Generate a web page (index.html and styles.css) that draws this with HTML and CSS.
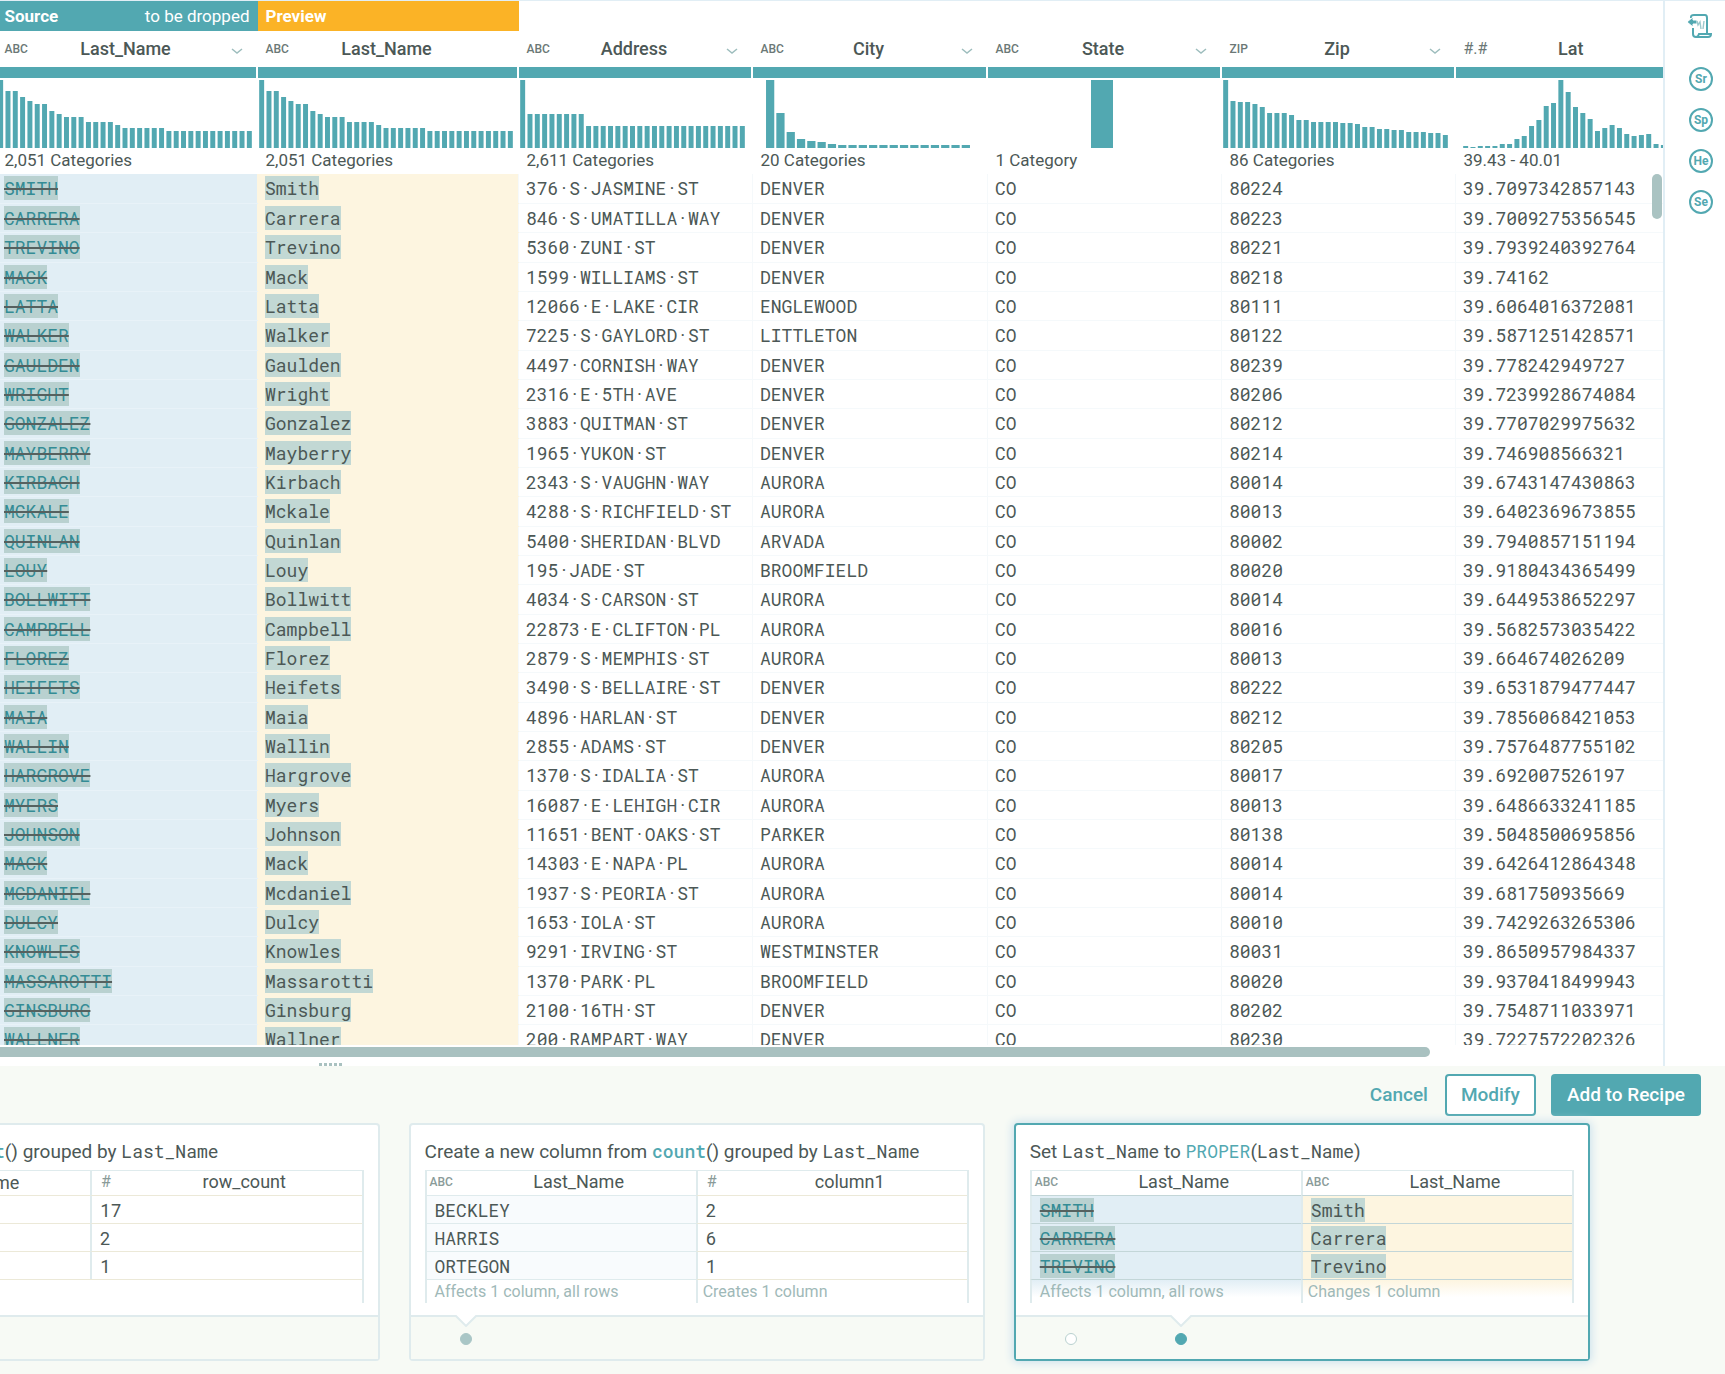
FILE: index.html
```html
<!DOCTYPE html>
<html lang="en">
<head>
<meta charset="utf-8">
<title>Transformer grid</title>
<link rel="stylesheet" href="styles.css">
</head>
<body>
<div class="workspace">
  <main class="grid-pane">
    <div class="viewport">
      <table class="grid">
        <colgroup><col class="c-wide"><col class="c-wide"><col class="c-even"><col class="c-odd"><col class="c-even"><col class="c-even"><col></colgroup>
        <thead>
          <tr class="banners">
            <th class="source"><div class="split"><b>Source</b><span>to be dropped</span></div></th>
            <th class="preview"><b>Preview</b></th>
            <td colspan="5"></td>
          </tr>
          <tr class="heads">
            <th>
              <div class="name"><span class="type">ABC</span><span class="label">Last_Name</span><button class="menu" aria-label="Last_Name menu"><svg viewBox="0 0 12 8"><path d="M1 2l5 4 5-4"/></svg></button></div>
              <div class="quality"></div>
              <svg class="hist h35" viewBox="0 0 35 68" preserveAspectRatio="none"><path d="M0 68V0h1v11h2v6h1v4h1v3h2v7h1v3h1v3h3v5h4v3h1v3h6v3h12v17z"/><path class="gaps" d="M-.16 34H36"/></svg>
              <div class="count">2,051 Categories</div>
            </th>
            <th>
              <div class="name"><span class="type">ABC</span><span class="label">Last_Name</span><span class="menu"></span></div>
              <div class="quality"></div>
              <svg class="hist h35" viewBox="0 0 35 68" preserveAspectRatio="none"><path d="M0 68V0h1v11h2v6h1v4h1v3h2v7h1v3h1v3h3v5h4v3h1v3h6v3h12v17z"/><path class="gaps" d="M-.16 34H36"/></svg>
              <div class="count">2,051 Categories</div>
            </th>
            <th>
              <div class="name"><span class="type">ABC</span><span class="label">Address</span><button class="menu" aria-label="Address menu"><svg viewBox="0 0 12 8"><path d="M1 2l5 4 5-4"/></svg></button></div>
              <div class="quality"></div>
              <svg class="hist h31" viewBox="0 0 31 68" preserveAspectRatio="none"><path d="M0 68V0h1v34h8v12h22v22z"/><path class="gaps" d="M-.16 34H36"/></svg>
              <div class="count">2,611 Categories</div>
            </th>
            <th>
              <div class="name"><span class="type">ABC</span><span class="label">City</span><button class="menu" aria-label="City menu"><svg viewBox="0 0 12 8"><path d="M1 2l5 4 5-4"/></svg></button></div>
              <div class="quality"></div>
              <svg class="hist h20" viewBox="0 0 20 68" preserveAspectRatio="none"><path d="M0 68V0h1v33h1v19h1v7h1v2h1v1h1v2h1v1h13v3z"/><path class="gaps" d="M-.1 34H36"/></svg>
              <div class="count">20 Categories</div>
            </th>
            <th>
              <div class="name"><span class="type">ABC</span><span class="label">State</span><button class="menu" aria-label="State menu"><svg viewBox="0 0 12 8"><path d="M1 2l5 4 5-4"/></svg></button></div>
              <div class="quality"></div>
              <svg class="hist h31" viewBox="0 0 227 68" preserveAspectRatio="none"><path d="M103 0h22v68h-22z"/></svg>
              <div class="count">1 Category</div>
            </th>
            <th>
              <div class="name"><span class="type">ZIP</span><span class="label">Zip</span><button class="menu" aria-label="Zip menu"><svg viewBox="0 0 12 8"><path d="M1 2l5 4 5-4"/></svg></button></div>
              <div class="quality"></div>
              <svg class="hist h31" viewBox="0 0 31 68" preserveAspectRatio="none"><path d="M0 68V0h1v21h1v1h2v2h1v3h1v6h3v2h1v5h2v2h4v1h2v1h1v3h2v2h2v1h2v2h3v1h2v2h1v13z"/><path class="gaps" d="M-.16 34H36"/></svg>
              <div class="count">86 Categories</div>
            </th>
            <th>
              <div class="name"><span class="type num">#.#</span><span class="label">Lat</span><span class="menu"></span></div>
              <div class="quality"></div>
              <svg class="hist h31 shifted" viewBox="0 0 31 68" preserveAspectRatio="none"><path d="M0 68V66h1v1h1v-1h3v-2h2v-5h1v-3h1v-10h1v-6h1v-14h1v-3h1V0h1v12h1v15h1v6h1v6h1v12h1v-3h1v-3h1v3h1v6h1v2h1v-1h1v-1h1v10h1v1h2v3z"/><path class="gaps" d="M-.16 34H36"/></svg>
              <div class="count">39.43 - 40.01</div>
            </th>
          </tr>
        </thead>
        <tbody>
          <tr><td><s>SMITH</s></td><td><mark>Smith</mark></td><td>376·S·JASMINE·ST</td><td>DENVER</td><td>CO</td><td>80224</td><td>39.7097342857143</td></tr>
          <tr><td><s>CARRERA</s></td><td><mark>Carrera</mark></td><td>846·S·UMATILLA·WAY</td><td>DENVER</td><td>CO</td><td>80223</td><td>39.7009275356545</td></tr>
          <tr><td><s>TREVINO</s></td><td><mark>Trevino</mark></td><td>5360·ZUNI·ST</td><td>DENVER</td><td>CO</td><td>80221</td><td>39.7939240392764</td></tr>
          <tr><td><s>MACK</s></td><td><mark>Mack</mark></td><td>1599·WILLIAMS·ST</td><td>DENVER</td><td>CO</td><td>80218</td><td>39.74162</td></tr>
          <tr><td><s>LATTA</s></td><td><mark>Latta</mark></td><td>12066·E·LAKE·CIR</td><td>ENGLEWOOD</td><td>CO</td><td>80111</td><td>39.6064016372081</td></tr>
          <tr><td><s>WALKER</s></td><td><mark>Walker</mark></td><td>7225·S·GAYLORD·ST</td><td>LITTLETON</td><td>CO</td><td>80122</td><td>39.5871251428571</td></tr>
          <tr><td><s>GAULDEN</s></td><td><mark>Gaulden</mark></td><td>4497·CORNISH·WAY</td><td>DENVER</td><td>CO</td><td>80239</td><td>39.778242949727</td></tr>
          <tr><td><s>WRIGHT</s></td><td><mark>Wright</mark></td><td>2316·E·5TH·AVE</td><td>DENVER</td><td>CO</td><td>80206</td><td>39.7239928674084</td></tr>
          <tr><td><s>GONZALEZ</s></td><td><mark>Gonzalez</mark></td><td>3883·QUITMAN·ST</td><td>DENVER</td><td>CO</td><td>80212</td><td>39.7707029975632</td></tr>
          <tr><td><s>MAYBERRY</s></td><td><mark>Mayberry</mark></td><td>1965·YUKON·ST</td><td>DENVER</td><td>CO</td><td>80214</td><td>39.746908566321</td></tr>
          <tr><td><s>KIRBACH</s></td><td><mark>Kirbach</mark></td><td>2343·S·VAUGHN·WAY</td><td>AURORA</td><td>CO</td><td>80014</td><td>39.6743147430863</td></tr>
          <tr><td><s>MCKALE</s></td><td><mark>Mckale</mark></td><td>4288·S·RICHFIELD·ST</td><td>AURORA</td><td>CO</td><td>80013</td><td>39.6402369673855</td></tr>
          <tr><td><s>QUINLAN</s></td><td><mark>Quinlan</mark></td><td>5400·SHERIDAN·BLVD</td><td>ARVADA</td><td>CO</td><td>80002</td><td>39.7940857151194</td></tr>
          <tr><td><s>LOUY</s></td><td><mark>Louy</mark></td><td>195·JADE·ST</td><td>BROOMFIELD</td><td>CO</td><td>80020</td><td>39.9180434365499</td></tr>
          <tr><td><s>BOLLWITT</s></td><td><mark>Bollwitt</mark></td><td>4034·S·CARSON·ST</td><td>AURORA</td><td>CO</td><td>80014</td><td>39.6449538652297</td></tr>
          <tr><td><s>CAMPBELL</s></td><td><mark>Campbell</mark></td><td>22873·E·CLIFTON·PL</td><td>AURORA</td><td>CO</td><td>80016</td><td>39.5682573035422</td></tr>
          <tr><td><s>FLOREZ</s></td><td><mark>Florez</mark></td><td>2879·S·MEMPHIS·ST</td><td>AURORA</td><td>CO</td><td>80013</td><td>39.664674026209</td></tr>
          <tr><td><s>HEIFETS</s></td><td><mark>Heifets</mark></td><td>3490·S·BELLAIRE·ST</td><td>DENVER</td><td>CO</td><td>80222</td><td>39.6531879477447</td></tr>
          <tr><td><s>MAIA</s></td><td><mark>Maia</mark></td><td>4896·HARLAN·ST</td><td>DENVER</td><td>CO</td><td>80212</td><td>39.7856068421053</td></tr>
          <tr><td><s>WALLIN</s></td><td><mark>Wallin</mark></td><td>2855·ADAMS·ST</td><td>DENVER</td><td>CO</td><td>80205</td><td>39.7576487755102</td></tr>
          <tr><td><s>HARGROVE</s></td><td><mark>Hargrove</mark></td><td>1370·S·IDALIA·ST</td><td>AURORA</td><td>CO</td><td>80017</td><td>39.692007526197</td></tr>
          <tr><td><s>MYERS</s></td><td><mark>Myers</mark></td><td>16087·E·LEHIGH·CIR</td><td>AURORA</td><td>CO</td><td>80013</td><td>39.6486633241185</td></tr>
          <tr><td><s>JOHNSON</s></td><td><mark>Johnson</mark></td><td>11651·BENT·OAKS·ST</td><td>PARKER</td><td>CO</td><td>80138</td><td>39.5048500695856</td></tr>
          <tr><td><s>MACK</s></td><td><mark>Mack</mark></td><td>14303·E·NAPA·PL</td><td>AURORA</td><td>CO</td><td>80014</td><td>39.6426412864348</td></tr>
          <tr><td><s>MCDANIEL</s></td><td><mark>Mcdaniel</mark></td><td>1937·S·PEORIA·ST</td><td>AURORA</td><td>CO</td><td>80014</td><td>39.681750935669</td></tr>
          <tr><td><s>DULCY</s></td><td><mark>Dulcy</mark></td><td>1653·IOLA·ST</td><td>AURORA</td><td>CO</td><td>80010</td><td>39.7429263265306</td></tr>
          <tr><td><s>KNOWLES</s></td><td><mark>Knowles</mark></td><td>9291·IRVING·ST</td><td>WESTMINSTER</td><td>CO</td><td>80031</td><td>39.8650957984337</td></tr>
          <tr><td><s>MASSAROTTI</s></td><td><mark>Massarotti</mark></td><td>1370·PARK·PL</td><td>BROOMFIELD</td><td>CO</td><td>80020</td><td>39.9370418499943</td></tr>
          <tr><td><s>GINSBURG</s></td><td><mark>Ginsburg</mark></td><td>2100·16TH·ST</td><td>DENVER</td><td>CO</td><td>80202</td><td>39.7548711033971</td></tr>
          <tr><td><s>WALLNER</s></td><td><mark>Wallner</mark></td><td>200·RAMPART·WAY</td><td>DENVER</td><td>CO</td><td>80230</td><td>39.7227572202326</td></tr>
        </tbody>
      </table>
      <div class="vthumb"></div>
    </div>
    <div class="hthumb"></div>
    <div class="resizer"><i></i><i></i><i></i><i></i><i></i></div>
  </main>
  <nav class="rail">
    <button class="recipe" aria-label="Recipe"><svg viewBox="0 0 26 28"><path d="M4 6V5q0-2 3-2h11q2 0 2 3v16M6 16v6q0 3 3 3h12q3 0 3-3H12q-1 3-3 3"/><path class="solid" d="M0 10l6-5v3h4v4H6v3z"/><path class="faint" d="M10 9l1 4 2-3 1 7m3-8l-1 8"/></svg></button>
    <button class="token">Sr</button>
    <button class="token">Sp</button>
    <button class="token">He</button>
    <button class="token">Se</button>
  </nav>
</div>
<section class="suggestions">
  <div class="actions">
    <button class="cancel">Cancel</button>
    <button class="modify">Modify</button>
    <button class="add">Add to Recipe</button>
  </div>
  <div class="cards">
    <article class="card cut">
      <h3><code class="fn">t</code>() grouped by <code>Last_Name</code></h3>
      <table class="mini">
        <colgroup><col class="c-cut"><col></colgroup>
        <tr><th><span class="label">me</span></th><th><div class="name"><span class="type num">#</span><span class="label">row_count</span></div></th></tr>
        <tr><td></td><td>17</td></tr>
        <tr><td></td><td>2</td></tr>
        <tr><td></td><td>1</td></tr>
        <tr class="notes"><td></td><td></td></tr>
      </table>
      <div class="foot"></div>
    </article>
    <article class="card">
      <h3>Create a new column from <code class="fn">count</code>() grouped by <code>Last_Name</code></h3>
      <table class="mini affects">
        <tr><th><div class="name"><span class="type">ABC</span><span class="label">Last_Name</span></div></th><th><div class="name"><span class="type num">#</span><span class="label">column1</span></div></th></tr>
        <tr><td>BECKLEY</td><td>2</td></tr>
        <tr><td>HARRIS</td><td>6</td></tr>
        <tr><td>ORTEGON</td><td>1</td></tr>
        <tr class="notes"><td>Affects 1 column, all rows</td><td>Creates 1 column</td></tr>
      </table>
      <div class="foot">
        <label class="choice on"><input type="radio" name="count" checked aria-label="Variant 1"><svg class="notch" viewBox="0 0 22 12"><path d="M0 0l11 11L22 0"/></svg></label>
      </div>
    </article>
    <article class="card active">
      <h3>Set <code>Last_Name</code> to <code class="fn plain">PROPER</code>(<code>Last_Name</code>)</h3>
      <table class="mini changes">
        <tr><th><div class="name"><span class="type">ABC</span><span class="label">Last_Name</span></div></th><th><div class="name"><span class="type">ABC</span><span class="label">Last_Name</span></div></th></tr>
        <tr><td><s>SMITH</s></td><td><mark>Smith</mark></td></tr>
        <tr><td><s>CARRERA</s></td><td><mark>Carrera</mark></td></tr>
        <tr><td><s>TREVINO</s></td><td><mark>Trevino</mark></td></tr>
        <tr class="notes"><td>Affects 1 column, all rows</td><td>Changes 1 column</td></tr>
      </table>
      <div class="foot">
        <label class="choice"><input type="radio" name="proper" aria-label="Variant 1"></label>
        <label class="choice on"><input type="radio" name="proper" checked aria-label="Variant 2"><svg class="notch" viewBox="0 0 22 12"><path d="M0 0l11 11L22 0"/></svg></label>
      </div>
    </article>
  </div>
</section>
</body>
</html>
```
FILE: styles.css
```css
:root {
  --teal: #52a8b1;
  --ink: #4c5856;
  --mist: #b9d1d0;
  --sky: #e1eef5;
  --cream: #fdf5e0;
  --panel: #f7faf5;
  --line: #dfebed;
  --mono: "Roboto Mono", "DejaVu Sans Mono", monospace;
}

* { box-sizing: border-box; }

html { height: 100%; }

body {
  display: flex;
  flex-direction: column;
  height: 100%;
  margin: 0;
  overflow: hidden;
  background: #fff;
  color: var(--ink);
  font: 17px/24px Roboto, "Open Sans", sans-serif;
}

button {
  padding: 0;
  border: 0;
  background: none;
  color: inherit;
  font: inherit;
}

.workspace {
  display: flex;
  flex: 1;
  min-height: 0;
  border-top: 1px solid var(--sky);
}

.grid-pane {
  display: flex;
  flex: 1;
  flex-direction: column;
  min-width: 0;
  border-right: 2px solid var(--sky);
}

.viewport {
  position: relative;
  flex: 1;
  min-height: 0;
  overflow: hidden;
}

/* The grid is scrolled so both edge columns run under the pane's sides. */
.grid {
  width: calc(100% + 30px);
  margin-left: -4px;
  border-collapse: collapse;
  table-layout: fixed;
}

.c-wide { width: 261px; }
.c-even { width: 234px; }
.c-odd { width: 235px; }

.grid th, .grid td { padding: 0; }

.banners { height: 30px; }
.banners th {
  padding: 0 8px;
  color: #fff;
  font-weight: 400;
  text-align: left;
}
.banners b { font-weight: 700; }
.source { background: var(--teal); }
.preview { background: #fbb326; }
.split { display: flex; justify-content: space-between; }

.heads th {
  padding: 0;
  font-weight: 400;
  text-align: left;
  vertical-align: top;
}

.name {
  display: flex;
  align-items: center;
  height: 36px;
  padding: 0 9px 0 8px;
}
.type {
  width: 32px;
  color: #6b7876;
  font-size: 12px;
  font-weight: 500;
  text-align: left;
}
.type.num { font-size: 16px; font-weight: 400; }
.label { flex: 1; font-size: 18px; text-align: center; }
.grid .label { font-weight: 500; }
.menu { width: 34px; text-align: right; }
.menu svg { display: inline-block; width: 12px; height: 8px; margin-right: 6px; fill: none; stroke: #9dbdbd; stroke-width: 1.5; }

.quality {
  height: 11px;
  margin-right: 2px;
  background: var(--teal);
}

.hist {
  display: block;
  height: 68px;
  margin: 2px 0 0;
  fill: var(--teal);
}
.h35 { width: 256px; }
.h31 { width: 227px; }
.h20 { width: 206px; margin-left: 12px; }
.shifted { margin-left: 6px; }
.gaps { stroke: #fff; stroke-width: 68; stroke-dasharray: .32 .68; }
.h20 .gaps { stroke-dasharray: .2 .8; }

.count { height: 26px; padding-left: 8px; }

.grid tbody { font: 18px/24px var(--mono); }
.grid tbody tr { height: 29px; }
.grid tbody tr:nth-child(3n) { height: 30px; }
.grid tbody td {
  padding: 0 0 0 7px;
  border-bottom: 1px solid #f5f9fb;
  border-left: 1px solid #f5f9fb;
  white-space: nowrap;
}
.grid tbody td:nth-child(1) { border-color: #e8f2f8; background: var(--sky); }
.grid tbody td:nth-child(2) { border-color: #fdf5e0; background: var(--cream); }

s, mark { display: inline-block; height: 24px; }
s {
  background: var(--mist);
  color: #348c95;
  text-decoration: line-through 2px #56615f;
}
mark { background: #c2d8d4; color: inherit; }

.vthumb {
  position: absolute;
  top: 173px;
  right: 1px;
  width: 10px;
  height: 45px;
  border-radius: 5px;
  background: #aac3c2;
}

.hthumb {
  width: 86%;
  height: 10px;
  margin: 2px 0 0;
  border-radius: 0 5px 5px 0;
  background: #a9c1c0;
}

.resizer { display: flex; gap: 2px; height: 9px; padding: 6px 0 0 319px; }
.resizer i { width: 3px; height: 3px; background: #a9c1c0; }

.rail {
  display: flex;
  flex-direction: column;
  align-items: center;
  gap: 17px;
  width: 60px;
  padding: 11px 0 0 12px;
}
.recipe { width: 26px; height: 28px; margin: 0 2px 10px 0; }
.recipe svg { display: block; fill: none; stroke: var(--teal); stroke-width: 2; }
.recipe .solid { fill: var(--teal); stroke: #fff; stroke-width: 1; }
.recipe .faint { stroke: #9dc9cd; stroke-width: 1.4; }
.token {
  width: 24px;
  height: 24px;
  border: 2px solid var(--teal);
  border-radius: 50%;
  color: var(--teal);
  font-size: 12px;
  font-weight: 700;
  line-height: 20px;
}

.suggestions {
  padding: 8px 0 13px;
  background: var(--panel);
}

.actions {
  display: flex;
  align-items: center;
  justify-content: flex-end;
  padding-right: 24px;
  color: var(--teal);
  font-size: 19px;
  font-weight: 500;
}
.actions button { height: 42px; }
.cancel { margin-right: 17px; }
.modify {
  margin-right: 15px;
  padding: 0 14px;
  border: 2px solid var(--teal);
  border-radius: 4px;
  background: #fff;
}
.add {
  padding: 0 16px;
  border-radius: 4px;
  background: var(--teal);
  color: #fff;
}

.cards {
  display: flex;
  gap: 29px;
  margin-top: 7px;
  padding-right: 135px;
}
.card {
  flex: 576 1 0;
  min-width: 0;
  border: 2px solid var(--line);
  border-radius: 4px;
  background: #fff;
}
.card.cut {
  flex-grow: 380;
  border-left: 0;
  border-radius: 0 4px 4px 0;
}
.card.active { border-color: var(--teal); box-shadow: 0 0 8px 2px #cfe3ee; }

.card h3 {
  margin: 0;
  padding: 14px 14px 6px;
  overflow: hidden;
  font-size: 19px;
  font-weight: 400;
  line-height: 24px;
  white-space: nowrap;
}
.card.cut h3 { padding-left: 0; text-indent: -6px; }
code { font: 18px/24px var(--mono); }
.fn { color: var(--teal); font-weight: 500; }
.fn.plain { font-weight: 400; }

.mini {
  width: calc(100% - 28px);
  margin: 0 14px;
  border-top: 1px solid var(--line);
  border-right: 2px solid var(--line);
  border-spacing: 0;
  table-layout: fixed;
}
.mini th, .mini td { padding: 0; border-left: 2px solid var(--line); }
.mini th { height: 24px; font-weight: 400; }
.mini .name { height: 22px; padding: 0 0 2px 3px; }
.mini .type { color: #8a9b99; }
.mini .type.num { padding-left: 6px; }
.mini td {
  height: 28px;
  padding-left: 8px;
  border-top: 1px solid var(--line);
  font: 18px/24px var(--mono);
  text-align: left;
}
.mini .notes td {
  height: 24px;
  padding-left: 5px;
  color: #9fb9b8;
  font: 16px/22px Roboto, "Open Sans", sans-serif;
}
.mini .notes td:first-child { padding-left: 8px; }

.card.cut .mini { width: calc(100% - 14px); margin-left: 0; }
.c-cut { width: 90px; }
.cut .mini th:first-child, .cut .mini td:first-child { border-left: 0; }
.cut .mini th:first-child { overflow: hidden; text-align: left; text-indent: -6px; }
.cut .mini .notes td { border-left: 0; }
.cut .mini td, .affects td:last-child { border-top-color: #ece9d8; }
.affects td:first-child { background: #f8fbfd; }
.affects .notes td:first-child { background: none; }

.changes td { border-top-color: #c3d6d8; }
.changes td:first-child { background: var(--sky); }
.changes td:last-child { background: var(--cream); }
.changes .notes td:first-child { background: linear-gradient(var(--sky), #fff 75%); }
.changes .notes td:last-child { background: linear-gradient(var(--cream), #fff 75%); }

.foot {
  display: flex;
  gap: 98px;
  height: 44px;
  margin-top: 12px;
  padding: 16px 0 0 49px;
  border-top: 2px solid var(--line);
  background: var(--panel);
}
.choice { position: relative; display: block; width: 12px; height: 12px; }
.choice input {
  display: block;
  width: 12px;
  height: 12px;
  margin: 0;
  border: 1px solid var(--mist);
  border-radius: 50%;
  background: #fff;
  appearance: none;
}
.choice.on input { border-color: #a9c6c6; background: #a9c6c6; }
.active .choice.on input { border-color: var(--teal); background: var(--teal); }
.notch {
  position: absolute;
  top: -18px;
  left: -5px;
  width: 22px;
  height: 12px;
  fill: #fff;
  stroke: var(--line);
  stroke-width: 2;
}
```
